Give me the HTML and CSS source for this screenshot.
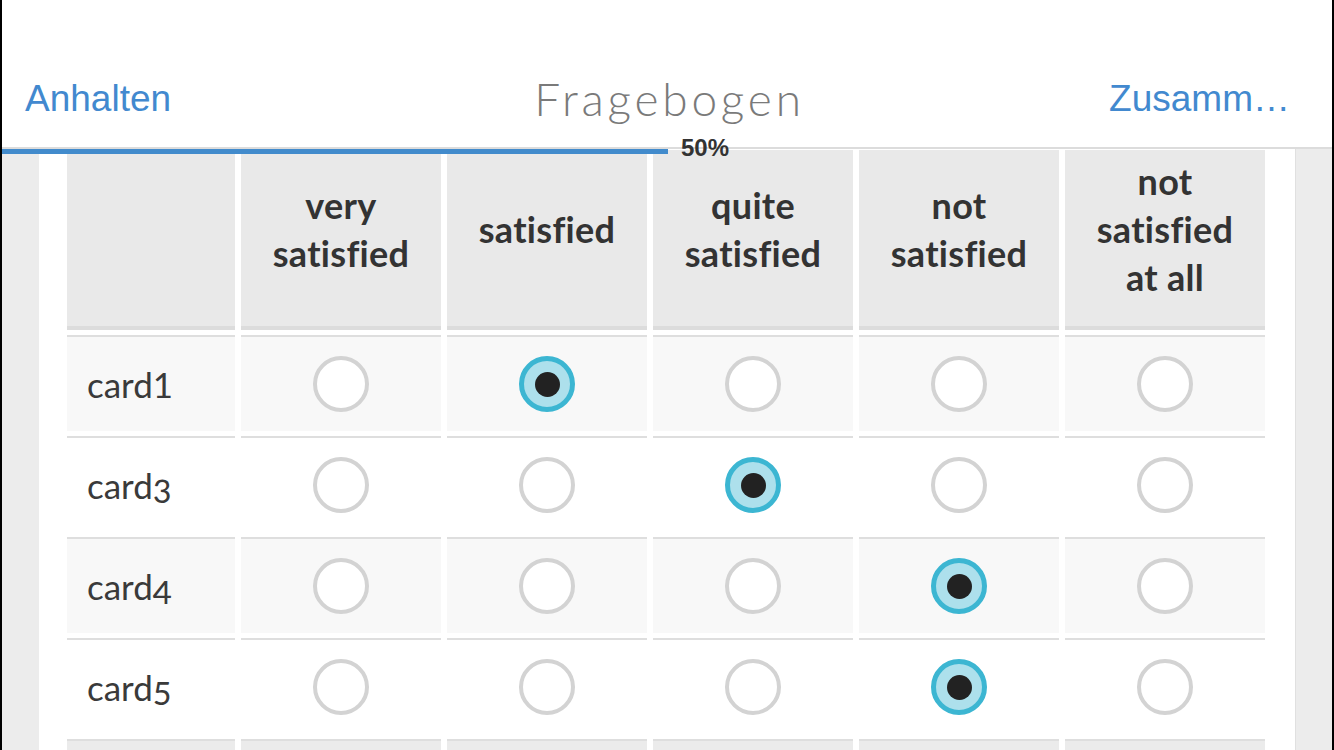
FILE: index.html
```html
<!DOCTYPE html>
<html lang="de">
<head>
<meta charset="utf-8">
<title>Fragebogen</title>
<link rel="stylesheet" href="styles.css">
</head>
<body>
<div class="screen">
  <header class="nav">
    <a class="nav-btn left">Anhalten</a>
    <h1 class="nav-title">Fragebogen</h1>
    <a class="nav-btn right">Zusamm…</a>
    <div class="progress"><div class="progress-fill" style="width:666px"></div></div>
    <span class="progress-label">50%</span>
  </header>
  <main class="main">
    <div class="side"></div>
    <section class="panel">
      <table class="matrix">
        <thead>
          <tr>
            <th></th>
            <th>very<br>satisfied</th>
            <th>satisfied</th>
            <th>quite<br>satisfied</th>
            <th>not<br>satisfied</th>
            <th>not<br>satisfied<br>at all</th>
          </tr>
        </thead>
        <tbody>
          <tr class="odd">
            <td class="label">card<span class="lining">1</span></td>
            <td><span class="radio"></span></td>
            <td><span class="radio on"></span></td>
            <td><span class="radio"></span></td>
            <td><span class="radio"></span></td>
            <td><span class="radio"></span></td>
          </tr>
          <tr>
            <td class="label">card3</td>
            <td><span class="radio"></span></td>
            <td><span class="radio"></span></td>
            <td><span class="radio on"></span></td>
            <td><span class="radio"></span></td>
            <td><span class="radio"></span></td>
          </tr>
          <tr class="odd">
            <td class="label">card4</td>
            <td><span class="radio"></span></td>
            <td><span class="radio"></span></td>
            <td><span class="radio"></span></td>
            <td><span class="radio on"></span></td>
            <td><span class="radio"></span></td>
          </tr>
          <tr>
            <td class="label">card5</td>
            <td><span class="radio"></span></td>
            <td><span class="radio"></span></td>
            <td><span class="radio"></span></td>
            <td><span class="radio on"></span></td>
            <td><span class="radio"></span></td>
          </tr>
          <tr class="foot">
            <td></td><td></td><td></td><td></td><td></td><td></td>
          </tr>
        </tbody>
      </table>
    </section>
    <div class="side right"></div>
  </main>
</div>
</body>
</html>
```

FILE: styles.css
```css
* { box-sizing: border-box; }
html, body { margin: 0; padding: 0; }
body {
  width: 1334px;
  height: 750px;
  overflow: hidden;
  background: #fff;
  font-family: "Lato", "Open Sans", sans-serif;
}
.screen {
  width: 1334px;
  height: 750px;
  border-left: 2px solid #000;
  border-right: 2px solid #000;
  display: flex;
  flex-direction: column;
  overflow: hidden;
}
.nav {
  position: relative;
  height: 149px;
  flex: none;
  display: flex;
  align-items: center;
  justify-content: space-between;
  padding: 50px 42px 0 23px;
  background: #fff;
  border-bottom: 2px solid #dcdcdc;
  z-index: 2;
}
.nav-btn {
  font-family: "Liberation Sans", Arial, sans-serif;
  font-size: 37px;
  color: #4289cf;
  text-decoration: none;
  width: 300px;
}
.nav-btn.right { text-align: right; }
.nav-title {
  margin: 0 0 0 24px;
  font-family: "Lato", sans-serif;
  font-weight: 300;
  font-size: 46px;
  color: #7a7a7a;
  letter-spacing: 3.8px;
}
.progress {
  position: absolute;
  left: 0;
  right: 0;
  top: 149px;
  height: 5px;
}
.progress-fill {
  height: 5px;
  background: #428bcc;
}
.progress-label {
  position: absolute;
  left: 679px;
  top: 134px;
  font-family: "Liberation Sans", Arial, sans-serif;
  font-weight: bold;
  font-size: 24px;
  color: #333;
}
.main {
  flex: 1;
  display: flex;
  min-height: 0;
}
.side {
  width: 37px;
  flex: none;
  background: #ececec;
}
.side.right {
  width: 36px;
}
.panel {
  flex: none;
  width: 1257px;
  background: #fff;
  border-right: 1px solid #e0e0e0;
  padding: 0 23px 0 22px;
  overflow: hidden;
}
.matrix {
  border-collapse: separate;
  border-spacing: 6px 5px;
  margin-top: -4px;
  table-layout: fixed;
  width: 1210px;
}
.matrix th:first-child,
.matrix td:first-child { width: 168px; }
.matrix th {
  height: 180px;
  padding: 0 2px 18px;
  background: #e9e9e9;
  border-bottom: 4px solid #dcdcdc;
  font-weight: bold;
  font-size: 36px;
  line-height: 48px;
  letter-spacing: 0.3px;
  color: #333;
  text-align: center;
  vertical-align: middle;
}
.matrix td {
  height: 96px;
  border-top: 2px solid #dedede;
  text-align: center;
  vertical-align: middle;
  padding: 0;
  background: #fff;
}
.matrix tr.odd td { background: #f8f8f8; }
.matrix td.label {
  text-align: left;
  padding-left: 20px;
  font-size: 35px;
  color: #3a3a3a;
  font-variant-numeric: oldstyle-nums;
}
.matrix td.label .lining {
  font-variant-numeric: lining-nums;
}
.matrix tr.foot td { background: #ebebeb; }
.radio {
  display: inline-block;
  width: 56px;
  height: 56px;
  border-radius: 50%;
  border: 4px solid #d3d3d3;
  background: #fff;
  vertical-align: middle;
  position: relative;
}
.radio.on {
  border: 5px solid #3cb6d2;
  background: #ade0ec;
}
.radio.on::after {
  content: "";
  position: absolute;
  left: 50%;
  top: 50%;
  width: 25px;
  height: 25px;
  margin: -12.5px 0 0 -12.5px;
  border-radius: 50%;
  background: #222;
}
```
